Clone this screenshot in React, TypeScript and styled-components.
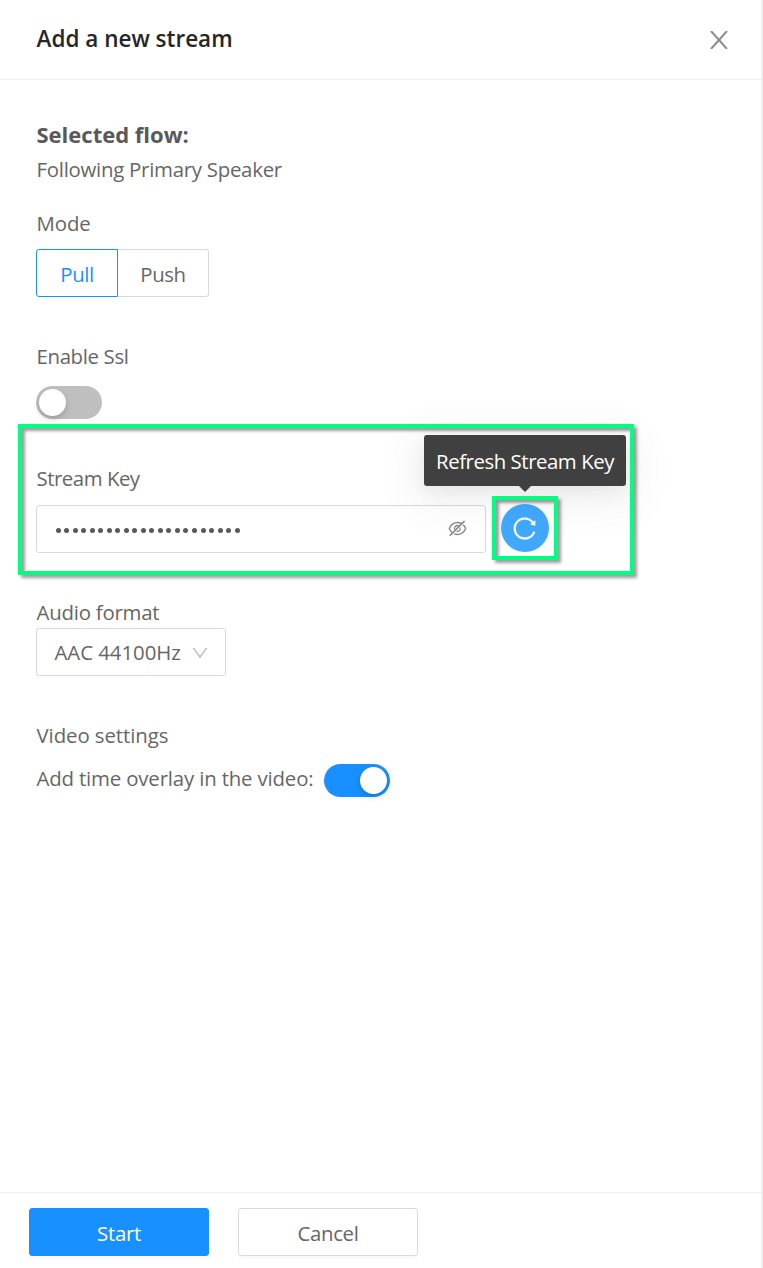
import React from 'react';
import styled, { createGlobalStyle } from 'styled-components';
import {
  AiOutlineDown,
  AiOutlineEyeInvisible,
  AiOutlineReload,
} from 'react-icons/ai';

const GlobalStyle = createGlobalStyle`
  * { box-sizing: border-box; }
  body { margin: 0; background: #fff; }
  button { font: inherit; letter-spacing: inherit; padding: 0; cursor: pointer; }
`;

const Drawer = styled.div`
  display: flex;
  flex-direction: column;
  width: 763px;
  height: 1268px;
  border-right: 2px solid #efefef;
  background: #fff;
  color: #666;
  font-family: 'Open Sans', 'Noto Sans', sans-serif;
  font-size: 20.4px;
  font-weight: 400;
  line-height: 32px;
`;

const Header = styled.header`
  display: flex;
  justify-content: space-between;
  align-items: center;
  height: 80px;
  padding: 0 33px 0 36px;
  border-bottom: 1px solid #efefef;
`;

const Title = styled.h1`
  margin: -2px 0 0;
  padding-left: 0.5px;
  color: #262626;
  font-size: 22.5px;
  font-weight: 600;
`;

const CloseButton = styled.button`
  display: flex;
  border: 0;
  background: none;
  color: #8c8c8c;
`;

const Body = styled.main`
  flex: 1;
  padding: 38px 36px 0;
`;

const Text = styled.div<{ $spacing?: number }>`
  height: 32px;
  padding-left: 0.5px;
  line-height: 30px;
  white-space: nowrap;
  letter-spacing: ${(p) => p.$spacing ?? 0}px;
`;

const FlowName = styled(Text)`
  margin-top: 4px;
`;

const Heading = styled(Text)`
  color: #595959;
  font-size: 22px;
  font-weight: 700;
  line-height: 32px;
`;

const Section = styled.section<{ $top: number; $gap: number }>`
  position: relative;
  display: flex;
  flex-direction: column;
  align-items: flex-start;
  margin-top: ${(p) => p.$top}px;

  > ${Text} {
    height: ${(p) => 32 + p.$gap}px;
  }
`;

const Segments = styled.div`
  display: flex;
  height: 48px;
`;

const Segment = styled.button<{ $active?: boolean }>`
  width: ${(p) => (p.$active ? 82 : 91)}px;
  padding-top: 1px;
  border: 1px solid ${(p) => (p.$active ? '#1890ff' : '#d9d9d9')};
  border-left-width: ${(p) => (p.$active ? 1 : 0)}px;
  border-radius: ${(p) => (p.$active ? '3px 0 0 3px' : '0 3px 3px 0')};
  background: #fff;
  color: ${(p) => (p.$active ? '#1890ff' : '#666')};
  letter-spacing: -0.4px;
`;

const Switch = styled.button<{ $on?: boolean }>`
  display: flex;
  align-items: center;
  justify-content: ${(p) => (p.$on ? 'flex-end' : 'flex-start')};
  width: 66px;
  height: 33px;
  padding: 3px;
  border: 0;
  border-radius: 17px;
  background: ${(p) => (p.$on ? '#1890ff' : '#bfbfbf')};
`;

const Knob = styled.span`
  width: 27px;
  height: 27px;
  border-radius: 50%;
  background: #fff;
  box-shadow: 0 3px 6px rgba(0, 35, 11, 0.2);
`;

const KeyRow = styled.div`
  display: flex;
  align-items: center;
  gap: 15px;
`;

const KeyField = styled.div`
  display: flex;
  align-items: center;
  justify-content: space-between;
  width: 450px;
  height: 48px;
  padding: 0 17px 0 18.5px;
  border: 1px solid #d9d9d9;
  border-radius: 3px;
  color: #8c8c8c;
  font-size: 21px;

  svg {
    margin-top: -2px;
  }
`;

const Dots = styled.span`
  display: flex;
  gap: 3.54px;
  padding-top: 2px;
`;

const Dot = styled.i`
  width: 5px;
  height: 5px;
  border-radius: 50%;
  background: #595959;
`;

const RefreshButton = styled.button`
  display: flex;
  align-items: center;
  justify-content: center;
  width: 48px;
  height: 48px;
  margin-top: -2px;
  border: 0;
  border-radius: 50%;
  background: #40a9ff;
  color: #fff;

  svg {
    width: 27px;
    height: 27px;
    margin: 1px 1px 0 0;
    stroke: #fff;
    stroke-width: 6px;
  }
`;

const Tooltip = styled.div`
  position: absolute;
  left: 388px;
  top: -28px;
  width: 202px;
  height: 51px;
  padding-top: 10px;
  border-radius: 3px;
  background: #404040;
  box-shadow: 0 9px 42px 12px rgba(0, 0, 0, 0.05), 0 6px 20px rgba(0, 0, 0, 0.06);
  color: #fff;
  letter-spacing: -0.46px;
  text-align: center;
  white-space: nowrap;

  &::after {
    content: '';
    position: absolute;
    left: 95px;
    top: 51px;
    border: 6px solid transparent;
    border-top-color: #404040;
    border-bottom-width: 0;
  }
`;

const Highlight = styled.div<{ $x: number; $y: number; $w: number; $h: number }>`
  position: absolute;
  left: ${(p) => p.$x}px;
  top: ${(p) => p.$y}px;
  width: ${(p) => p.$w}px;
  height: ${(p) => p.$h}px;
  border: 4px solid #00ff80;
  box-shadow: 3px 3px 3px rgba(0, 0, 0, 0.38), inset 3px 3px 3px rgba(0, 0, 0, 0.38);
  pointer-events: none;
`;

const Select = styled.button`
  display: flex;
  align-items: center;
  justify-content: space-between;
  width: 190px;
  height: 48px;
  padding: 0 15px 0 17.5px;
  border: 1px solid #d9d9d9;
  border-radius: 3px;
  background: #fff;
  color: #666;
  letter-spacing: -0.05px;

  svg {
    margin-top: 1px;
    color: #bfbfbf;
    font-size: 20px;
  }
`;

const OverlayRow = styled.div`
  display: flex;
  gap: 10px;

  ${Text} {
    width: 278px;
    margin-top: -1px;
  }
`;

const Footer = styled.footer`
  display: flex;
  gap: 29px;
  height: 76px;
  padding: 15px 29px 0;
  border-top: 1px solid #efefef;
`;

const Action = styled.button<{ $primary?: boolean }>`
  width: 180px;
  height: 48px;
  padding-top: 1px;
  border: 1px solid ${(p) => (p.$primary ? '#1890ff' : '#d9d9d9')};
  border-radius: 3px;
  background: ${(p) => (p.$primary ? '#1890ff' : '#fff')};
  box-shadow: 0 3px 0 rgba(0, 0, 0, 0.02);
  color: ${(p) => (p.$primary ? '#fff' : '#666')};
  letter-spacing: -0.3px;
`;

export default function App() {
  return (
    <>
      <GlobalStyle />
      <Drawer>
        <Header>
          <Title>Add a new stream</Title>
          <CloseButton aria-label="Close">
            <svg width="18" height="18" viewBox="0 0 18 18" fill="none" stroke="currentColor" strokeWidth="2">
              <path d="M1 0 17 18M17 0 1 18" />
            </svg>
          </CloseButton>
        </Header>
        <Body>
          <Heading>Selected flow:</Heading>
          <FlowName $spacing={-0.26}>Following Primary Speaker</FlowName>
          <Section $top={22} $gap={9}>
            <Text $spacing={-0.1}>Mode</Text>
            <Segments>
              <Segment $active>Pull</Segment>
              <Segment>Push</Segment>
            </Segments>
          </Section>
          <Section $top={44} $gap={13}>
            <Text $spacing={-0.35}>Enable Ssl</Text>
            <Switch aria-label="Enable Ssl"><Knob /></Switch>
          </Section>
          <Section $top={44} $gap={10}>
            <Text $spacing={-0.48}>Stream Key</Text>
            <KeyRow>
              <KeyField>
                <Dots>
                  {Array.from({ length: 22 }, (_, i) => <Dot key={i} />)}
                </Dots>
                <AiOutlineEyeInvisible />
              </KeyField>
              <RefreshButton aria-label="Refresh Stream Key"><AiOutlineReload /></RefreshButton>
            </KeyRow>
            <Tooltip>Refresh Stream Key</Tooltip>
            <Highlight $x={-18} $y={-39} $w={616} $h={151} />
            <Highlight $x={456} $y={33} $w={66} $h={64} />
          </Section>
          <Section $top={44} $gap={-1}>
            <Text $spacing={-0.22}>Audio format</Text>
            <Select>AAC 44100Hz<AiOutlineDown /></Select>
          </Section>
          <Section $top={44} $gap={12}>
            <Text $spacing={-0.08}>Video settings</Text>
            <OverlayRow>
              <Text $spacing={-0.16}>Add time overlay in the video:</Text>
              <Switch $on aria-label="Time overlay"><Knob /></Switch>
            </OverlayRow>
          </Section>
        </Body>
        <Footer>
          <Action $primary>Start</Action>
          <Action>Cancel</Action>
        </Footer>
      </Drawer>
    </>
  );
}
